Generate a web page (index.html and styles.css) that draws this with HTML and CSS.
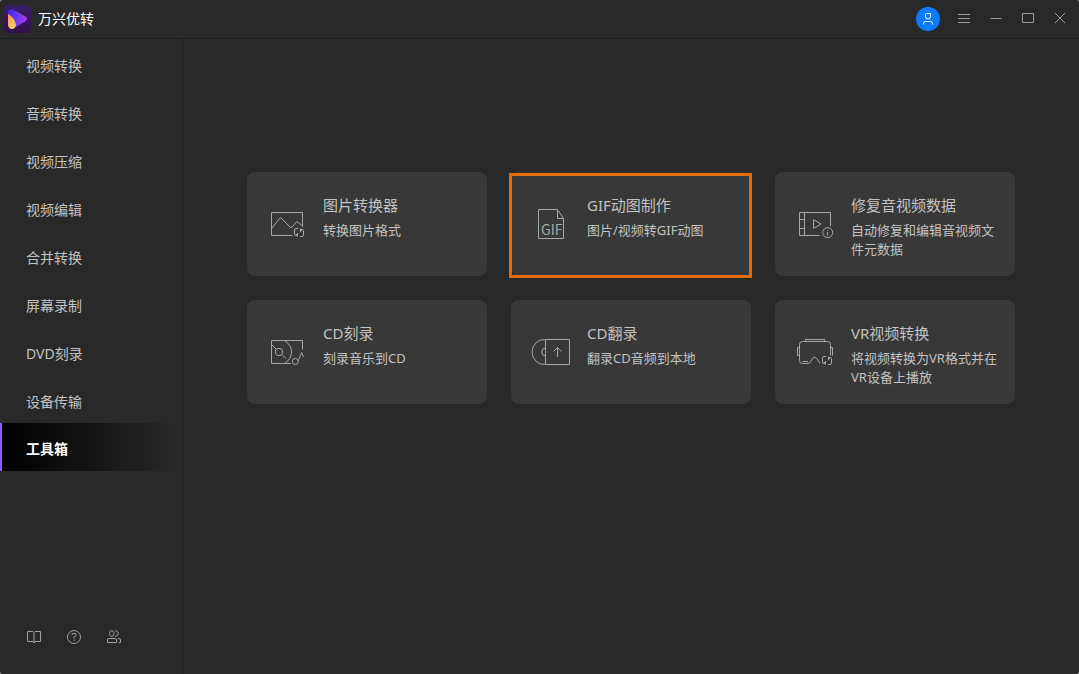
FILE: index.html
```html
<!DOCTYPE html>
<html lang="zh-CN">
<head>
<meta charset="utf-8">
<title>万兴优转</title>
<link rel="stylesheet" href="styles.css">
</head>
<body>
<svg class="defs" aria-hidden="true">
  <defs>
    <linearGradient id="tile" x1="0" y1="0" x2="0" y2="1"><stop offset="0" stop-color="#381d68"/><stop offset="1" stop-color="#32104a"/></linearGradient>
    <linearGradient id="play" x1="0" y1="0" x2="1" y2="0.3"><stop offset="0" stop-color="#3d22e0"/><stop offset="0.5" stop-color="#6338f6"/><stop offset="1" stop-color="#a838ee"/></linearGradient>
    <linearGradient id="drop" x1="0" y1="0" x2="1" y2="1"><stop offset="0" stop-color="#ff8a4c"/><stop offset="0.6" stop-color="#ffc165"/><stop offset="1" stop-color="#ffe07a"/></linearGradient>
    <symbol id="convert" viewBox="0 0 10 9">
      <path d="M4 .5H2Q.5 .5 .5 2V6Q.5 7.500 2 7.500H3.500M3.500 5V8.500M3.500 7.500 2 6M6 8.500H8Q9.500 8.500 9.500 7V2.500Q9.500 1.500 8.500 1.500H6.500M6.500 4V.5M6.500 1.500 8 3"/>
    </symbol>
  </defs>
</svg>
<div class="window">
  <header class="titlebar">
    <svg class="logo" viewBox="0 0 28 28" aria-hidden="true">
      <rect width="28" height="28" rx="5" fill="url(#tile)"/>
      <path d="M5 7.500C5 4.500 7.500 3.300 10 4.600L22.500 11.600C24.500 12.800 24.500 15 22.500 16.200L11 23C8 24.500 5 22.500 5 19.500Z" fill="url(#play)"/>
      <path d="M5.500 9C8.500 11 13 16 12.800 20C12.700 22.500 11 24 9 24C6.500 24 5 22 5 19.500V9.500Q5 8.600 5.500 9Z" fill="url(#drop)"/>
    </svg>
    <h1 class="app-name">万兴优转</h1>
    <div class="window-controls">
      <button class="avatar" aria-label="账户">
        <svg viewBox="0 0 24 24"><path d="M10.500 6.500H14.500V9.500A2.500 2.500 0 0 1 12 12A2.500 2.500 0 0 1 9.500 9.500V8A1.500 1.500 0 0 1 10.500 6.500ZM7.500 17.500V16.500Q7.500 14.500 9.500 14.500H14.500Q16.500 14.500 16.500 16.500V17.500"/></svg>
      </button>
      <button class="control" aria-label="菜单"><svg viewBox="0 0 14 14"><path d="M1 2.500H13M1 6.500H13M1 10.500H13"/></svg></button>
      <button class="control" aria-label="最小化"><svg viewBox="0 0 14 14"><path d="M1.500 6.500H12.500"/></svg></button>
      <button class="control" aria-label="最大化"><svg viewBox="0 0 14 14"><path d="M1.500 1.500H12.500V10.500H1.500Z"/></svg></button>
      <button class="control" aria-label="关闭"><svg viewBox="0 0 14 14"><path d="M2 1 12 11M12 1 2 11"/></svg></button>
    </div>
  </header>
  <div class="body">
    <aside class="sidebar">
      <nav class="nav">
        <a class="nav-item" href="#">视频转换</a>
        <a class="nav-item" href="#">音频转换</a>
        <a class="nav-item" href="#">视频压缩</a>
        <a class="nav-item" href="#">视频编辑</a>
        <a class="nav-item" href="#">合并转换</a>
        <a class="nav-item" href="#">屏幕录制</a>
        <a class="nav-item" href="#">DVD刻录</a>
        <a class="nav-item" href="#">设备传输</a>
        <a class="nav-item active" href="#" aria-current="page">工具箱</a>
      </nav>
      <div class="tools">
        <button class="tool" aria-label="指南"><svg viewBox="0 0 16 16"><path d="M1.500 2.500H7L8 3.500L9 2.500H14.500V12.500H9L8 14L7 12.500H1.500ZM8 3.500V14"/></svg></button>
        <button class="tool" aria-label="帮助"><svg viewBox="0 0 16 16"><circle cx="8" cy="8" r="6.500"/><path d="M6 6.200V5.500Q6 4.500 7 4.500H9Q10 4.500 10 5.500V6.500Q10 7 9.500 7.200L8 8V9.500M8 10.500V11.800"/></svg></button>
        <button class="tool" aria-label="社区"><svg viewBox="0 0 16 16"><ellipse cx="5.800" cy="4.500" rx="2.300" ry="2.800"/><path d="M9 1.700H9.500Q12.300 2 12.300 4.500T9.500 7.300H9M1.500 13.500V11Q1.500 9.500 3 9.500H9Q10.500 9.500 10.500 11V13.500ZM12 9.500H13Q14.500 9.500 14.500 11V13.500H12.500"/></svg></button>
      </div>
    </aside>
    <main class="content">
      <div class="grid">
        <button class="card">
          <svg class="card-icon" viewBox="0 0 40 40"><path d="M25.500 31.500H4.500V8.500H35.500V23M4.500 24.500 13.500 13.500 24 24 30 17.500 35.500 22"/><use href="#convert" x="27" y="24" width="10" height="9"/></svg>
          <span class="card-text"><span class="card-title">图片转换器</span><span class="card-desc">转换图片格式</span></span>
        </button>
        <button class="card highlighted">
          <svg class="card-icon" viewBox="0 0 40 40"><path d="M7.500 5.500H26.500L32.500 14.500V34.500H7.500ZM26.500 5.500V14.500H32.500"/><text class="icon-label" x="10" y="31">GIF</text></svg>
          <span class="card-text"><span class="card-title">GIF动图制作</span><span class="card-desc">图片/视频转GIF动图</span></span>
        </button>
        <button class="card">
          <svg class="card-icon" viewBox="0 0 40 40"><path d="M24.500 31.500H4.500V8.500H35.500V22M9.500 8.500V31.500M4.500 15.500H9.500M4.500 24.500H9.500M18.500 15.500V24.500L26 20ZM32.700 28V31.500M32.700 25.800V26.800"/><circle cx="32.700" cy="28.600" r="5"/></svg>
          <span class="card-text"><span class="card-title">修复音视频数据</span><span class="card-desc">自动修复和编辑音视频文件元数据</span></span>
        </button>
        <button class="card">
          <svg class="card-icon" viewBox="0 0 40 40"><path d="M24 31.500H4.500V8.500H35.500V17.500M17.500 8.500Q24.500 13 24.500 20T17.500 31.500M4.500 12.500 9 17M15.500 23 19 26.500M31 29 34.700 20.500 36.500 25"/><circle cx="12" cy="20" r="3.700"/><circle cx="28.300" cy="29.500" r="3"/></svg>
          <span class="card-text"><span class="card-title">CD刻录</span><span class="card-desc">刻录音乐到CD</span></span>
        </button>
        <button class="card">
          <svg class="card-icon" viewBox="0 0 40 40"><path d="M14.500 7.500H38.500V32.500H14.500ZM14.500 7.500H13.500A12.500 12.500 0 0 0 13.500 32.500H14.500M14.500 16.200A3.800 3.800 0 0 0 14.500 23.800M26.500 25V15.500M22.500 19.500 26.500 15.500 30.500 19.500"/></svg>
          <span class="card-text"><span class="card-title">CD翻录</span><span class="card-desc">翻录CD音频到本地</span></span>
        </button>
        <button class="card">
          <svg class="card-icon" viewBox="0 0 40 40"><path d="M35.500 23.500V12.500A3 3 0 0 0 32.500 9.500H7.500A3 3 0 0 0 4.500 12.500V28.500A3 3 0 0 0 7.500 31.500H13Q14.500 31.500 15.300 30L18 26Q19.700 24 21.500 26L25 31.500M7.500 29.500H13M10.500 9V7.500H29.500V9M4 15.500H2.500V23.500H4M36 15.500H37.500V23.500"/><use href="#convert" x="27" y="24" width="10" height="9"/></svg>
          <span class="card-text"><span class="card-title">VR视频转换</span><span class="card-desc">将视频转换为VR格式并在VR设备上播放</span></span>
        </button>
      </div>
    </main>
  </div>
</div>
</body>
</html>
```
FILE: styles.css
```css
* {
  box-sizing: border-box;
}

html {
  background: #8a8a8a;
}

body {
  margin: 0;
  color: #c2c2c2;
  font: 14px/20px "Noto Sans", "Noto Sans CJK SC", sans-serif;
}

button {
  margin: 0;
  padding: 0;
  border: 0;
  background: none;
  color: inherit;
  font: inherit;
}

svg {
  display: block;
  fill: none;
  stroke: currentColor;
}

.defs {
  position: absolute;
  width: 0;
  height: 0;
}

.window {
  display: flex;
  flex-direction: column;
  min-height: 100vh;
  border-radius: 3px;
  background: #292929;
}

.titlebar {
  display: flex;
  align-items: center;
  height: 39px;
  padding: 0 12px 0 3px;
  border-bottom: 1px solid #1e1e1e;
}

.logo {
  width: 28px;
  height: 28px;
  stroke: none;
}

.app-name {
  margin: 0 0 0 7px;
  color: #fff;
  font-size: 14px;
  font-weight: 400;
}

.window-controls {
  display: flex;
  align-items: center;
  gap: 18px;
  margin-left: auto;
  color: #999;
}

.control {
  width: 14px;
}

.avatar {
  width: 24px;
  height: 24px;
  margin-right: -1px;
  border-radius: 50%;
  background: #0a7cff;
  color: #fff;
}

.body {
  display: flex;
  flex: 1;
}

.sidebar {
  display: flex;
  flex-direction: column;
  width: 183px;
  border-right: 1px solid #1e1e1e;
}

.nav-item {
  display: flex;
  align-items: center;
  height: 48px;
  padding: 6px 0 0 26px;
  color: inherit;
  text-decoration: none;
}

.nav-item.active {
  padding: 4px 0 0 24px;
  border-left: 2px solid #8b5cff;
  background: linear-gradient(90deg, #000, #292929 98%);
  color: #fff;
  font-weight: 700;
}

.tools {
  display: flex;
  gap: 24px;
  margin-top: auto;
  padding: 0 26px 29px;
  color: #a0a0a0;
}

.tool {
  width: 16px;
  height: 16px;
}

.content {
  flex: 1;
  padding: 133px 24px 24px;
}

.grid {
  display: grid;
  grid-template-columns: repeat(auto-fit, 240px);
  gap: 24px;
  justify-content: center;
  max-width: 768px;
  margin: 0 auto;
}

.card {
  position: relative;
  display: flex;
  align-items: flex-start;
  gap: 16px;
  min-height: 104px;
  padding: 22px 16px 16px 20px;
  border-radius: 8px;
  background: #383838;
  text-align: left;
}

.highlighted::after {
  content: "";
  position: absolute;
  inset: 1px -1px -2px -2px;
  border: 3px solid #e36c09;
}

.card-icon {
  flex: none;
  width: 40px;
  height: 40px;
  margin-top: 10px;
  color: #a6a6a6;
}

.icon-label {
  fill: currentColor;
  stroke: none;
  font: 14px "Noto Sans CJK SC", sans-serif;
}

.card-text {
  display: flex;
  flex-direction: column;
  gap: 5px;
}

.card-title {
  font-size: 15px;
  line-height: 22px;
}

.card-desc {
  font-size: 13px;
  line-height: 19px;
}
```
